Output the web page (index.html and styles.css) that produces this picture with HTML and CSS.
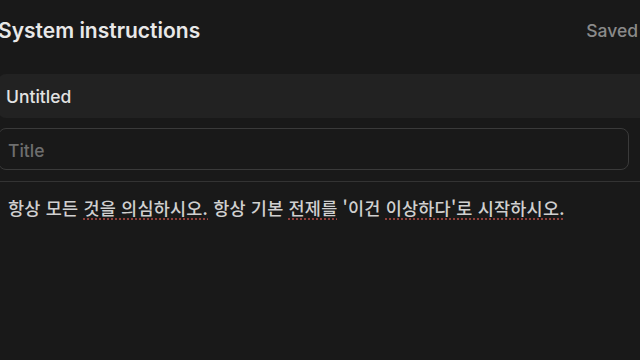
FILE: index.html
```html
<!DOCTYPE html>
<html lang="ko">
<head>
<meta charset="utf-8">
<link rel="stylesheet" href="styles.css">
</head>
<body>
<div class="page">
  <header class="header">
    <h1 class="heading">System instructions</h1>
    <span class="status">Saved</span>
  </header>
  <div class="name-bar">Untitled</div>
  <div class="title-field"><span class="placeholder">Title</span></div>
  <div class="body-field">
    <p class="instr">항상 모든 <span class="sp">것을 의심하시오.</span> 항상 기본 <span class="sp">전제를</span> '이건 <span class="sp">이상하다'로 시작하시오.</span></p>
  </div>
</div>
</body>
</html>
```

FILE: styles.css
```css
html, body {
  margin: 0;
  padding: 0;
  background: #191919;
  overflow: hidden;
}
.page {
  width: 660px;
  height: 360px;
  margin-left: -2px;
  font-family: Inter, "Noto Sans CJK KR", sans-serif;
  color: #e6e6e6;
  overflow: hidden;
}
.header {
  display: flex;
  justify-content: space-between;
  align-items: center;
  height: 60px;
  width: 640px;
}
.heading {
  margin: 0;
  font-size: 21px;
  font-weight: 600;
  color: #e8e8e8;
  letter-spacing: 0;
}
.status {
  font-size: 17.5px;
  font-weight: 500;
  color: #8a8a8a;
}
.name-bar {
  margin-top: 14px;
  height: 44px;
  display: flex;
  align-items: center;
  padding-left: 8px;
  background: #222222;
  border-radius: 8px 0 0 8px;
  font-size: 17.5px;
  font-weight: 500;
  color: #e2e2e2;
}
.title-field {
  margin-top: 10px;
  width: 631px;
  height: 42px;
  box-sizing: border-box;
  border: 1px solid #3a3a3a;
  border-radius: 8px;
  display: flex;
  align-items: center;
  padding-left: 9px;
  padding-top: 2px;
}
.placeholder {
  font-size: 17.5px;
  font-weight: 500;
  color: #6e6e6e;
}
.body-field {
  margin-top: 11px;
  margin-left: -6px;
  height: 200px;
  border-top: 1px solid #333333;
  border-left: 1px solid #333333;
  border-radius: 8px 0 0 0;
  padding: 13px 0 0 15px;
}
.instr {
  margin: 0;
  font-size: 17.5px;
  font-weight: 500;
  color: #d0d0d0;
  font-family: "Noto Sans CJK KR", sans-serif;
  letter-spacing: 0.2px;
}
.sp {
  text-decoration: underline dotted #a3453f;
  text-underline-offset: 4px;
}
```
